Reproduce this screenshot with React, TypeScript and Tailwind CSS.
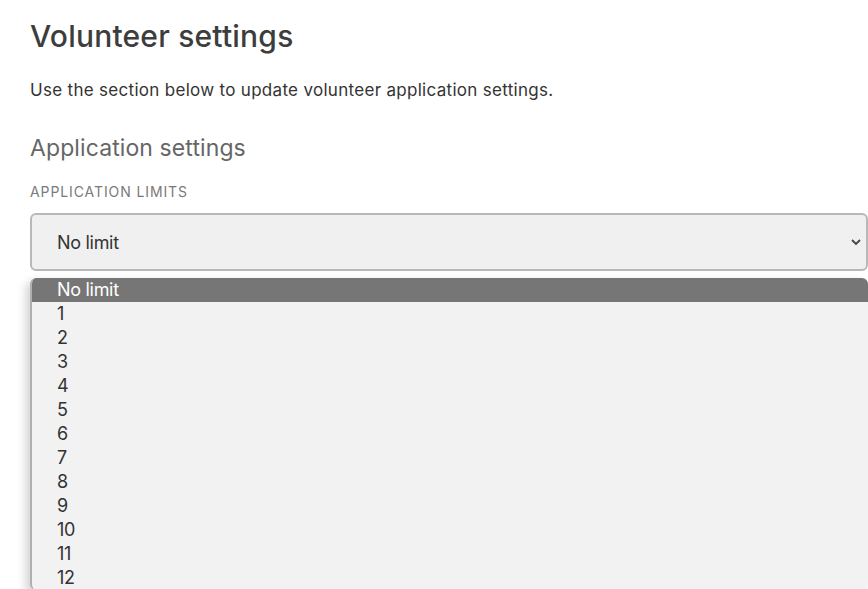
import React from 'react';

const limits = ['No limit', '1', '2', '3', '4', '5', '6', '7', '8', '9', '10', '11', '12'];

export default function App() {
  return (
    <div className="h-[589px] overflow-hidden bg-white pl-[30px] pt-[17px] font-['Inter',sans-serif]">
      <h1 className="text-[30px] leading-[38px] font-medium text-[#3d3d3d] tracking-[0.2px]">Volunteer settings</h1>
      <p className="mt-[23px] text-[17px] leading-[24px] text-[#333] tracking-[0.3px]">
        Use the section below to update volunteer application settings.
      </p>

      <h2 className="mt-[31px] text-[23px] leading-[30px] text-[#666] tracking-[0.1px]">Application settings</h2>
      <div className="mt-[20px] text-[14px] leading-[17px] tracking-[0.9px] text-[#7a7a7a] uppercase">Application limits</div>

      {/* limits select, shown open */}
      <div className="relative mt-[13px] w-[838px]">
        <div className="flex h-[58px] items-center justify-between rounded-[6px] border-2 border-[#b8b8b8] bg-[#f0f0f0] pl-[25px] pr-[4px]">
          <span className="text-[18px] text-[#333] tracking-[-0.3px]">No limit</span>
          <svg width="12" height="8" viewBox="0 0 12 8" className="text-[#444]">
            <path d="M2 2l4 4 4-4" fill="none" stroke="currentColor" strokeWidth="1.8" />
          </svg>
        </div>

        <ul className="absolute left-0 top-[65px] w-[838px] overflow-hidden rounded-[6px] border-l-2 border-[#b0b0b0] bg-[#f2f2f2] shadow-[-4px_4px_10px_rgba(0,0,0,0.18)]">
          {limits.map((v, i) => (
            <li
              key={v}
              className={
                'h-[24px] pl-[25px] text-[18px] leading-[24px] tracking-[-0.3px] ' +
                (i === 0 ? 'bg-[#767676] text-white' : 'text-[#333]')
              }
            >
              {v}
            </li>
          ))}
        </ul>
      </div>
    </div>
  );
}
